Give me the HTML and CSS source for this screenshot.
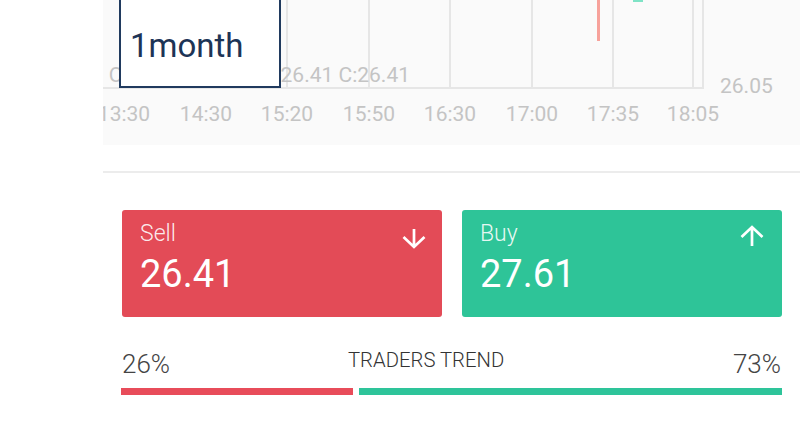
FILE: index.html
```html
<!DOCTYPE html>
<html lang="en">
<head>
<meta charset="utf-8">
<title>Trade</title>
<link rel="stylesheet" href="styles.css">
</head>
<body>
<div class="page">
  <section class="chart">
    <svg class="chart-canvas" width="697" height="145" viewBox="0 0 697 145" xmlns="http://www.w3.org/2000/svg">
      <g class="grid">
        <line x1="21" y1="0" x2="21" y2="88"/>
        <line x1="103" y1="0" x2="103" y2="88"/>
        <line x1="184" y1="0" x2="184" y2="88"/>
        <line x1="266" y1="0" x2="266" y2="88"/>
        <line x1="347" y1="0" x2="347" y2="88"/>
        <line x1="429" y1="0" x2="429" y2="88"/>
        <line x1="510" y1="0" x2="510" y2="88"/>
        <line x1="590" y1="0" x2="590" y2="88"/>
        <line x1="600" y1="0" x2="600" y2="89"/>
        <line x1="0" y1="88" x2="601" y2="88"/>
      </g>
      <rect class="candle-down" x="494" y="0" width="3" height="41"/>
      <rect class="candle-up" x="530" y="0" width="10" height="2"/>
      <text class="axis ohlc" x="307" y="82" text-anchor="end">O:26.41 H:26.41 L:26.41 C:26.41</text>
      <text class="axis" x="617" y="93">26.05</text>
      <g class="axis" text-anchor="middle">
        <text x="21" y="121">13:30</text>
        <text x="103" y="121">14:30</text>
        <text x="184" y="121">15:20</text>
        <text x="266" y="121">15:50</text>
        <text x="347" y="121">16:30</text>
        <text x="429" y="121">17:00</text>
        <text x="510" y="121">17:35</text>
        <text x="590" y="121">18:05</text>
      </g>
    </svg>
    <div class="period-box">1month</div>
  </section>

  <hr class="divider">

  <section class="trade">
    <div class="card sell">
      <div class="card-head">
        <span class="card-label">Sell</span>
        <svg class="card-arrow" width="26" height="22" viewBox="0 0 26 22" xmlns="http://www.w3.org/2000/svg">
          <path d="M13 2 V19.5 M2.5 10 L13 20 L23.5 10" fill="none" stroke="#fff" stroke-width="2.7"/>
        </svg>
      </div>
      <div class="card-value">26.41</div>
    </div>
    <div class="card buy">
      <div class="card-head">
        <span class="card-label">Buy</span>
        <svg class="card-arrow up" width="26" height="22" viewBox="0 0 26 22" xmlns="http://www.w3.org/2000/svg">
          <path d="M13 21 V3 M2.5 12 L13 2 L23.5 12" fill="none" stroke="#fff" stroke-width="2.7"/>
        </svg>
      </div>
      <div class="card-value">27.61</div>
    </div>
  </section>

  <section class="trend">
    <div class="trend-labels">
      <span class="trend-pct">26%</span>
      <span class="trend-title">TRADERS TREND</span>
      <span class="trend-pct right">73%</span>
    </div>
    <div class="trend-bars">
      <div class="bar bar-sell"></div>
      <div class="bar bar-buy"></div>
    </div>
  </section>
</div>
</body>
</html>
```
FILE: styles.css
```css
html, body {
  margin: 0;
  padding: 0;
  background: #ffffff;
}

body {
  font-family: Roboto, "Noto Sans", "Liberation Sans", sans-serif;
  width: 800px;
  height: 427px;
  overflow: hidden;
}

.page {
  margin-left: 103px;
  width: 697px;
}

/* chart */
.chart {
  position: relative;
  height: 145px;
  background: #fafafa;
  overflow: hidden;
}

.chart-canvas {
  display: block;
}

.grid line {
  stroke: #e6e6e6;
  stroke-width: 2;
}

.candle-down {
  fill: #f7a29b;
}

.candle-up {
  fill: #7fe3c6;
}

.axis {
  font-family: Roboto, "Noto Sans", sans-serif;
  font-size: 21px;
  fill: #c4c4c4;
}

.period-box {
  position: absolute;
  left: 16px;
  top: -3px;
  width: 158px;
  height: 59px;
  padding-top: 28px;
  border: 2px solid #203a5e;
  background: #ffffff;
  font-size: 33px;
  line-height: 38px;
  color: #1d3456;
  text-indent: 9px;
}

/* divider */
.divider {
  margin: 26px 0 0 0;
  height: 0;
  border: 0;
  border-top: 2px solid #ececec;
}

/* trade cards */
.trade {
  display: flex;
  gap: 20px;
  padding: 0 18px 0 19px;
  margin-top: 37px;
}

.card {
  flex: 1 1 0;
  height: 107px;
  border-radius: 3px;
  padding: 10px 15px 0 18px;
  box-sizing: border-box;
  color: #ffffff;
}

.sell {
  background: #e34b57;
}

.buy {
  background: #2ec498;
}

.card-head {
  display: flex;
  justify-content: space-between;
  align-items: flex-start;
  height: 28px;
}

.card-label {
  font-size: 23px;
  font-weight: 300;
  line-height: 28px;
  color: rgba(255, 255, 255, 0.9);
}

.card-arrow {
  display: block;
  margin-top: 7px;
}

.card-arrow.up {
  margin-top: 5px;
  margin-right: 2px;
}

.card-value {
  font-size: 38px;
  line-height: 44px;
  margin-top: 4px;
}

/* traders trend */
.trend {
  padding: 0 18px 0 18px;
  margin-top: 32px;
}

.trend-labels {
  display: grid;
  grid-template-columns: 227px 1fr auto;
  align-items: start;
  color: #444444;
}

.trend-pct {
  font-size: 26px;
  font-weight: 300;
  line-height: 30px;
  padding-left: 1px;
}

.trend-pct.right {
  padding-left: 0;
  padding-right: 1px;
}

.trend-title {
  font-size: 20.3px;
  font-weight: 300;
  line-height: 22px;
  color: #333333;
}

.trend-bars {
  display: flex;
  gap: 6px;
  margin-top: 9px;
}

.bar {
  height: 7px;
}

.bar-sell {
  flex: 0 0 232px;
  background: #e84c5a;
}

.bar-buy {
  flex: 1 1 auto;
  background: #2ec49a;
}
```
